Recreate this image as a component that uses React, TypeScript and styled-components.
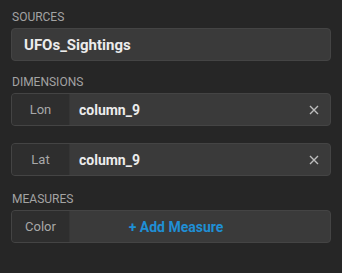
import { createGlobalStyle, styled } from "styled-components";

const GlobalStyle = createGlobalStyle`
  html, body {
    margin: 0;
    background: #262626;
    font-family: Roboto, "Liberation Sans", sans-serif;
  }
`;

const Panel = styled.div`
  width: 342px;
  height: 273px;
  padding: 10px 11px 0 11px;
  box-sizing: border-box;
  display: flex;
  flex-direction: column;
`;

const SectionTitle = styled.div<{ $top?: number }>`
  color: #a3a3a3;
  font-size: 12px;
  line-height: 14px;
  text-transform: uppercase;
  margin-top: ${(p) => p.$top ?? 0}px;
  margin-bottom: 4px;
  margin-left: 1px;
`;

const Box = styled.div`
  height: 33px;
  box-sizing: border-box;
  width: 320px;
  background: #3a3a3a;
  border: 1px solid #444444;
  border-radius: 4px;
  display: flex;
  align-items: stretch;
  overflow: hidden;
`;

const SourceValue = styled.div`
  color: #ececec;
  font-weight: 700;
  font-size: 15px;
  display: flex;
  align-items: center;
  padding-left: 12px;
`;

const Tag = styled.div`
  width: 57px;
  flex: none;
  background: #2e2e2e;
  border-right: 1px solid #353535;
  color: #a8a8a8;
  font-size: 13px;
  display: flex;
  align-items: center;
  justify-content: center;
`;

const FieldValue = styled.div`
  flex: 1;
  color: #ececec;
  font-weight: 700;
  font-size: 14px;
  display: flex;
  align-items: center;
  padding-left: 9px;
`;

const Clear = styled.div`
  width: 32px;
  flex: none;
  display: flex;
  align-items: center;
  justify-content: center;
  color: #bdbdbd;
`;

const AddMeasure = styled.div`
  flex: 1;
  color: #1f8fd5;
  font-weight: 700;
  font-size: 14px;
  display: flex;
  align-items: center;
  justify-content: center;
  padding-right: 48px;
`;

const Spacer = styled.div<{ $h: number }>`
  height: ${(p) => p.$h}px;
`;

const CloseIcon = () => (
  <svg width="10" height="10" viewBox="0 0 10 10">
    <path d="M1 1L9 9M9 1L1 9" stroke="currentColor" strokeWidth="1.4" />
  </svg>
);

const Row = ({ tag, value }: { tag: string; value: string }) => (
  <Box>
    <Tag>{tag}</Tag>
    <FieldValue>{value}</FieldValue>
    <Clear>
      <CloseIcon />
    </Clear>
  </Box>
);

const App = () => (
  <>
    <GlobalStyle />
    <Panel>
      <SectionTitle>Sources</SectionTitle>
      <Box>
        <SourceValue>UFOs_Sightings</SourceValue>
      </Box>
      <SectionTitle $top={14}>Dimensions</SectionTitle>
      <Row tag="Lon" value="column_9" />
      <Spacer $h={17} />
      <Row tag="Lat" value="column_9" />
      <SectionTitle $top={16}>Measures</SectionTitle>
      <Box>
        <Tag>Color</Tag>
        <AddMeasure>+ Add Measure</AddMeasure>
      </Box>
    </Panel>
  </>
);

export default App;
